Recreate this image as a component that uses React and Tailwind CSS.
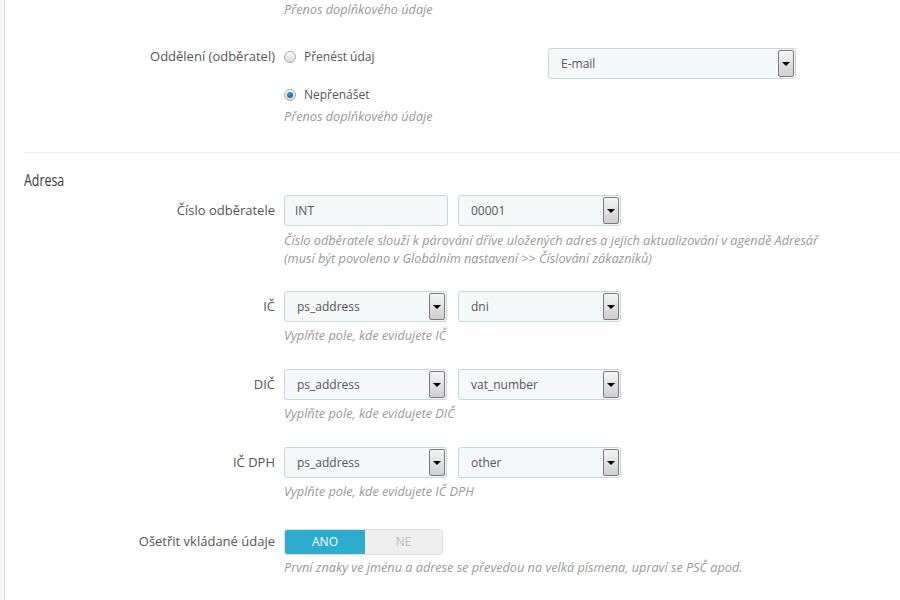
import React from "react";

const font = { fontFamily: '"Open Sans", "Noto Sans", sans-serif' };

function Arrow() {
  return (
    <div className="absolute right-[1px] top-[1px] bottom-[1px] w-[16px] border border-[#7a7a7a] rounded-[2px] bg-gradient-to-b from-[#f4f4f4] to-[#cfcfcf] flex items-center justify-center">
      <div className="w-0 h-0 border-l-[4px] border-r-[4px] border-t-[4px] border-l-transparent border-r-transparent border-t-black" />
    </div>
  );
}

function Select({ value, w = "w-[163px]" }) {
  return (
    <div className={`relative ${w} h-[31px] bg-[#f5f8f9] border border-[#c7d6db] rounded-[3px] flex items-center pl-[12px] text-[12px] text-[#555]`}>
      {value}
      <Arrow />
    </div>
  );
}

function Input({ value }) {
  return (
    <div className="w-[164px] h-[31px] bg-[#f5f8f9] border border-[#c7d6db] rounded-[3px] flex items-center pl-[10px] text-[12px] text-[#555]">
      {value}
    </div>
  );
}

function Help({ children, className = "" }) {
  return (
    <div className={`text-[12.7px] leading-[18px] italic text-[#999] whitespace-nowrap ${className}`}>{children}</div>
  );
}

function Radio({ checked, label }) {
  return (
    <div className="flex items-center h-[18px]">
      <div className="w-[12px] h-[12px] rounded-full border border-[#a9a9a9] bg-gradient-to-b from-[#fdfdfd] to-[#d9d9d9] flex items-center justify-center">
        {checked && (
          <div className="w-[6px] h-[6px] rounded-full bg-[radial-gradient(circle_at_40%_35%,#3d9be0,#0b4d8c)]" />
        )}
      </div>
      <span className="ml-[8px] text-[12px] text-[#555]">{label}</span>
    </div>
  );
}

function Row({ label, children, top, labelH = "h-[31px]" }) {
  return (
    <div className={`flex ${top}`}>
      <div className={`w-[270px] shrink-0 ${labelH} flex items-center justify-end text-[13px] text-[#555]`}>
        {label}
      </div>
      <div className="pl-[9px] flex flex-col">{children}</div>
    </div>
  );
}

export default function App() {
  return (
    <div className="w-[900px] h-[600px] bg-white overflow-hidden flex" style={font}>
      <div className="w-[5px] h-full bg-[#f3f4f5] border-r border-[#dde1e3] shrink-0" />
      <div className="flex-1 flex flex-col">
        <div className="pl-[279px]">
          <Help>Přenos doplňkového údaje</Help>
        </div>

        <Row label="Oddělení (odběratel)" top="mt-[30px]" labelH="h-[18px]">
          <div className="flex">
            <div className="w-[264px] flex flex-col">
              <Radio label="Přenést údaj" />
              <div className="mt-[20px]">
                <Radio checked label="Nepřenášet" />
              </div>
              <Help className="mt-[3px]">Přenos doplňkového údaje</Help>
            </div>
            <Select value="E-mail" w="w-[248px]" />
          </div>
        </Row>

        <div className="ml-[19px] mt-[27px] h-px bg-[#eeeeee]" />

        <div className="ml-[19px] mt-[18px] h-[18px] text-[15.5px] leading-[18px] text-[#363a41]">
          <span className="inline-block origin-left scale-x-[0.8]">Adresa</span>
        </div>

        <Row label="Číslo odběratele" top="mt-[6px]">
          <div className="flex gap-[10px]">
            <Input value="INT" />
            <Select value="00001" />
          </div>
          <Help className="mt-[5px]">
            Číslo odběratele slouží k párování dříve uložených adres a jejich aktualizování v agendě Adresář
            <br />
            (musí být povoleno v Globálním nastavení &gt;&gt; Číslování zákazníků)
          </Help>
        </Row>

        <Row label="IČ" top="mt-[24px]">
          <div className="flex gap-[11px]">
            <Select value="ps_address" />
            <Select value="dni" />
          </div>
          <Help className="mt-[4px]">Vyplňte pole, kde evidujete IČ</Help>
        </Row>

        <Row label="DIČ" top="mt-[25px]">
          <div className="flex gap-[11px]">
            <Select value="ps_address" />
            <Select value="vat_number" />
          </div>
          <Help className="mt-[4px]">Vyplňte pole, kde evidujete DIČ</Help>
        </Row>

        <Row label="IČ DPH" top="mt-[25px]">
          <div className="flex gap-[11px]">
            <Select value="ps_address" />
            <Select value="other" />
          </div>
          <Help className="mt-[4px]">Vyplňte pole, kde evidujete IČ DPH</Help>
        </Row>

        <Row label="Ošetřit vkládané údaje" top="mt-[29px]" labelH="h-[26px]">
          <div className="flex w-[159px] h-[26px] rounded-[3px] overflow-hidden border border-[#e0e0e0] text-[12px]">
            <div className="w-[80px] bg-[#2eacce] text-white flex items-center justify-center">ANO</div>
            <div className="flex-1 bg-[#eeeeee] text-[#bbbbbb] flex items-center justify-center">NE</div>
          </div>
          <Help className="mt-[3px]">První znaky ve jménu a adrese se převedou na velká písmena, upraví se PSČ apod.</Help>
        </Row>
      </div>
    </div>
  );
}
